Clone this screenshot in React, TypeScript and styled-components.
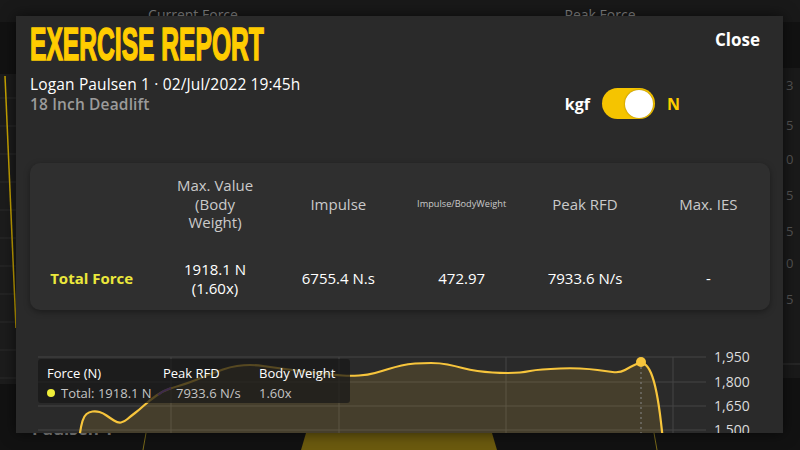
import styled, { createGlobalStyle } from "styled-components";

const GlobalStyle = createGlobalStyle`
  html, body {
    margin: 0;
    padding: 0;
    background: #121212;
  }
  body {
    font-family: "Open Sans", "Noto Sans", sans-serif;
  }
`;

const YELLOW = "#ffcc00";

const Page = styled.div`
  position: relative;
  width: 800px;
  height: 450px;
  overflow: hidden;
  background: #121212;
`;

/* ---------- app behind the modal ---------- */

const Backdrop = styled.div`
  display: grid;
  grid-template-rows: 22px 1fr 28px;
  height: 100%;
`;

const BackTop = styled.div`
  display: grid;
  grid-template-columns: 386px 428px;
  align-items: end;
  background: #191919;
`;

const BackLabel = styled.span`
  text-align: center;
  font-size: 14px;
  color: #858585;
  line-height: 14px;
`;

const BackBody = styled.div`
  display: flex;
  padding-top: 46px;
`;

const BackBottom = styled.div`
  position: relative;
  display: flex;
  align-items: flex-start;
  padding-left: 32px;
  font-size: 17px;
  font-weight: 700;
  color: #8a8a8a;
  line-height: 14px;
`;

const BottomArt = styled.svg`
  position: absolute;
  left: 0;
  top: 0;
`;

const BottomName = styled.span`
  position: relative;
`;

/* ---------- modal ---------- */

const Modal = styled.section`
  position: absolute;
  top: 16px;
  left: 16px;
  width: 767px;
  height: 417px;
  box-sizing: border-box;
  padding: 5px 13px 0 14px;
  background: #2a2a2a;
  overflow: hidden;
  box-shadow: 0 0 14px rgba(0, 0, 0, 0.6);
`;

const Header = styled.header`
  display: flex;
  justify-content: space-between;
  align-items: flex-start;
`;

const Title = styled.h1`
  margin: 0;
  font-family: "Liberation Sans", Arial, sans-serif;
  font-weight: 700;
  font-size: 46px;
  line-height: 46px;
  color: ${YELLOW};
  -webkit-text-stroke: 1.6px ${YELLOW};
  white-space: nowrap;
  transform: scaleX(0.535);
  transform-origin: left center;
`;

const CloseButton = styled.button`
  margin: 9px 10px 0 0;
  padding: 0;
  border: none;
  background: none;
  font-family: inherit;
  font-size: 17px;
  font-weight: 700;
  line-height: 20px;
  color: #fff;
  cursor: pointer;
`;

const InfoRow = styled.div`
  display: flex;
  justify-content: space-between;
  align-items: flex-start;
  margin-top: 7px;
`;

const Info = styled.div`
  display: flex;
  flex-direction: column;
`;

const Line = styled.span<{ $muted?: boolean }>`
  font-size: 15.5px;
  line-height: 20px;
  letter-spacing: 0.15px;
  font-weight: ${(p) => (p.$muted ? 600 : 500)};
  color: ${(p) => (p.$muted ? "#9b9b9b" : "#fff")};
  white-space: nowrap;
`;

const UnitToggle = styled.div`
  display: flex;
  align-items: center;
  gap: 12px;
  margin: 14px 90px 0 0;
`;

const UnitLabel = styled.span<{ $active?: boolean }>`
  font-size: 16px;
  font-weight: 700;
  color: ${(p) => (p.$active ? YELLOW : "#fff")};
`;

const Switch = styled.div`
  display: flex;
  justify-content: flex-end;
  align-items: center;
  box-sizing: border-box;
  width: 53px;
  height: 31px;
  padding: 0 2px;
  border-radius: 16px;
  background: #f5c400;
`;

const Knob = styled.div`
  width: 28px;
  height: 28px;
  border-radius: 50%;
  background: #fff;
  box-shadow: 0 0 2px rgba(0, 0, 0, 0.4);
`;

const Card = styled.div`
  margin-top: 44px;
  display: grid;
  grid-template-columns: repeat(6, 1fr);
  grid-template-rows: 82px 65px;
  border-radius: 10px;
  background: #2f2f2f;
  box-shadow: 0 2px 6px rgba(0, 0, 0, 0.35);
`;

const Cell = styled.div<{ $head?: boolean; $label?: boolean; $tiny?: boolean }>`
  display: flex;
  align-items: center;
  justify-content: center;
  text-align: center;
  font-size: ${(p) => (p.$tiny ? "9.2px" : "15px")};
  line-height: 18.5px;
  font-weight: ${(p) => (p.$label ? 700 : p.$head ? 400 : 500)};
  color: ${(p) => (p.$label ? "#ebe83c" : p.$head ? "#cacaca" : "#fff")};
  padding-top: ${(p) => (p.$head ? 0 : 2)}px;
`;

const ChartWrap = styled.div`
  position: relative;
  margin-top: 30px;
  height: 100px;
`;

const Tooltip = styled.div`
  position: absolute;
  left: 8px;
  top: 19px;
  width: 312px;
  height: 44px;
  box-sizing: border-box;
  padding: 4px 9px 0;
  border-radius: 3px;
  background: rgba(24, 24, 24, 0.72);
  display: grid;
  grid-template-columns: 116px 96px auto;
  grid-template-rows: 20px 20px;
  align-items: center;
`;

const TipText = styled.span<{ $head?: boolean; $shift?: number }>`
  display: flex;
  align-items: center;
  gap: 6px;
  font-size: 13px;
  font-weight: 500;
  white-space: nowrap;
  color: ${(p) => (p.$head ? "#fff" : "#c4c4c4")};
  padding-left: ${(p) => p.$shift ?? 0}px;
`;

const Dot = styled.i`
  width: 8px;
  height: 8px;
  border-radius: 50%;
  background: #f0ee3a;
`;

const linePts: [number, number][] = [
  [49, 100], [51, 86], [54, 76], [59, 72], [66, 71], [73, 73], [80, 78],
  [88, 83], [94, 82], [101, 76], [109, 70], [120, 60], [133, 51],
  [145, 47], [155, 44], [166, 40], [175, 36], [186, 32], [200, 27],
  [214, 25], [226, 25], [240, 27], [255, 29], [270, 31], [290, 33],
  [305, 35], [320, 36], [338, 35], [352, 31], [365, 27], [378, 24],
  [392, 23], [410, 23], [425, 26], [440, 30], [455, 32], [470, 33],
  [485, 33], [495, 32], [505, 30], [520, 29], [540, 28], [560, 29],
  [575, 31], [590, 33], [600, 27], [611, 22], [618, 26], [624, 40],
  [629, 65], [633, 100],
];

const toPath = (pts: [number, number][]) =>
  pts
    .map(([x, y], i) => {
      if (i === 0) return `M${x},${y}`;
      const [px, py] = pts[i - 1];
      return `Q${px},${py} ${(px + x) / 2},${(py + y) / 2}`;
    })
    .join(" ") + ` L${pts[pts.length - 1][0]},${pts[pts.length - 1][1]}`;

function ForceChart() {
  const line = toPath(linePts);
  const area = `${line} L49,100 Z`;
  const gridY = [17, 42, 66, 90];
  const labels = ["1,950", "1,800", "1,650", "1,500"];
  return (
    <svg width="740" height="100" viewBox="0 0 740 100">
      {gridY.map((y) => (
        <line key={y} x1="8" x2="676" y1={y} y2={y} stroke="#444" strokeWidth="1" />
      ))}
      {[141, 309, 476, 643].map((x) => (
        <line key={x} x1={x} x2={x} y1="17" y2="100" stroke="#444" strokeWidth="1" />
      ))}
      <path d={area} fill="rgba(255, 204, 60, 0.13)" />
      <line x1="611" x2="611" y1="22" y2="100" stroke="#888" strokeWidth="1" strokeDasharray="2 3" />
      <path d={line} fill="none" stroke="#f7c53c" strokeWidth="2.2" strokeLinejoin="round" />
      <path d="M128,55 Q134,50 141,48" fill="none" stroke="#9b59d0" strokeWidth="2" />
      <circle cx="611" cy="22" r="5" fill="#f7c53c" />
      {labels.map((t, i) => (
        <text
          key={t}
          x="684"
          y={gridY[i] + 5}
          fontSize="14"
          fill="#dcdcdc"
          fontFamily="'Open Sans', sans-serif"
        >
          {t}
        </text>
      ))}
    </svg>
  );
}

function BackChart() {
  return (
    <svg width="800" height="354" viewBox="0 0 800 354">
      <rect x="0" y="6" width="16" height="310" fill="#1c1c1c" />
      {[30, 58, 86, 114, 142, 170, 198, 226, 254, 282, 310].map((y) => (
        <line key={y} x1="0" x2="16" y1={y} y2={y} stroke="#2b2b2b" />
      ))}
      <path d="M5,8 L16,260" stroke="#c9a500" strokeWidth="1.5" fill="none" />
      <text x="4" y="-7" fontSize="14" fontWeight="700" fill="#a33" fontFamily="'Open Sans', sans-serif">
        16
      </text>
      <rect x="783" y="-60" width="17" height="370" fill="#1a1a1a" />
      {[22, 62, 96, 132, 168, 200, 236].map((y, i) => (
        <text key={y} x="786" y={y} fontSize="13" fill="#555" fontFamily="'Open Sans', sans-serif">
          {["3", "5", "0", "5", "5", "0", "5"][i]}
        </text>
      ))}
      <line x1="783" x2="800" y1="296" y2="296" stroke="#333" />
    </svg>
  );
}

export default function App() {
  return (
    <Page>
      <GlobalStyle />
      <Backdrop>
        <BackTop>
          <BackLabel>Current Force</BackLabel>
          <BackLabel>Peak Force</BackLabel>
        </BackTop>
        <BackBody>
          <BackChart />
        </BackBody>
        <BackBottom>
          <BottomArt width="800" height="28" viewBox="0 0 800 28">
            <path d="M306,11 L492,11 L497,28 L301,28 Z" fill="#6b5a0e" />
            <line x1="146" x2="143" y1="11" y2="28" stroke="#7a6a1a" />
            <line x1="654" x2="657" y1="11" y2="28" stroke="#7a6a1a" />
          </BottomArt>
          <BottomName>Paulsen 1</BottomName>
        </BackBottom>
      </Backdrop>

      <Modal>
        <Header>
          <Title>EXERCISE REPORT</Title>
          <CloseButton>Close</CloseButton>
        </Header>
        <InfoRow>
          <Info>
            <Line>Logan Paulsen 1 · 02/Jul/2022 19:45h</Line>
            <Line $muted>18 Inch Deadlift</Line>
          </Info>
          <UnitToggle>
            <UnitLabel>kgf</UnitLabel>
            <Switch>
              <Knob />
            </Switch>
            <UnitLabel $active>N</UnitLabel>
          </UnitToggle>
        </InfoRow>

        <Card>
          <Cell $head />
          <Cell $head>
            Max. Value
            <br />
            (Body
            <br />
            Weight)
          </Cell>
          <Cell $head>Impulse</Cell>
          <Cell $head $tiny>
            Impulse/BodyWeight
          </Cell>
          <Cell $head>Peak RFD</Cell>
          <Cell $head>Max. IES</Cell>

          <Cell $label>Total Force</Cell>
          <Cell>
            1918.1 N
            <br />
            (1.60x)
          </Cell>
          <Cell>6755.4 N.s</Cell>
          <Cell>472.97</Cell>
          <Cell>7933.6 N/s</Cell>
          <Cell>-</Cell>
        </Card>

        <ChartWrap>
          <ForceChart />
          <Tooltip>
            <TipText $head>Force (N)</TipText>
            <TipText $head>Peak RFD</TipText>
            <TipText $head>Body Weight</TipText>
            <TipText>
              <Dot />
              Total: 1918.1 N
            </TipText>
            <TipText $shift={13}>7933.6 N/s</TipText>
            <TipText>1.60x</TipText>
          </Tooltip>
        </ChartWrap>
      </Modal>
    </Page>
  );
}
